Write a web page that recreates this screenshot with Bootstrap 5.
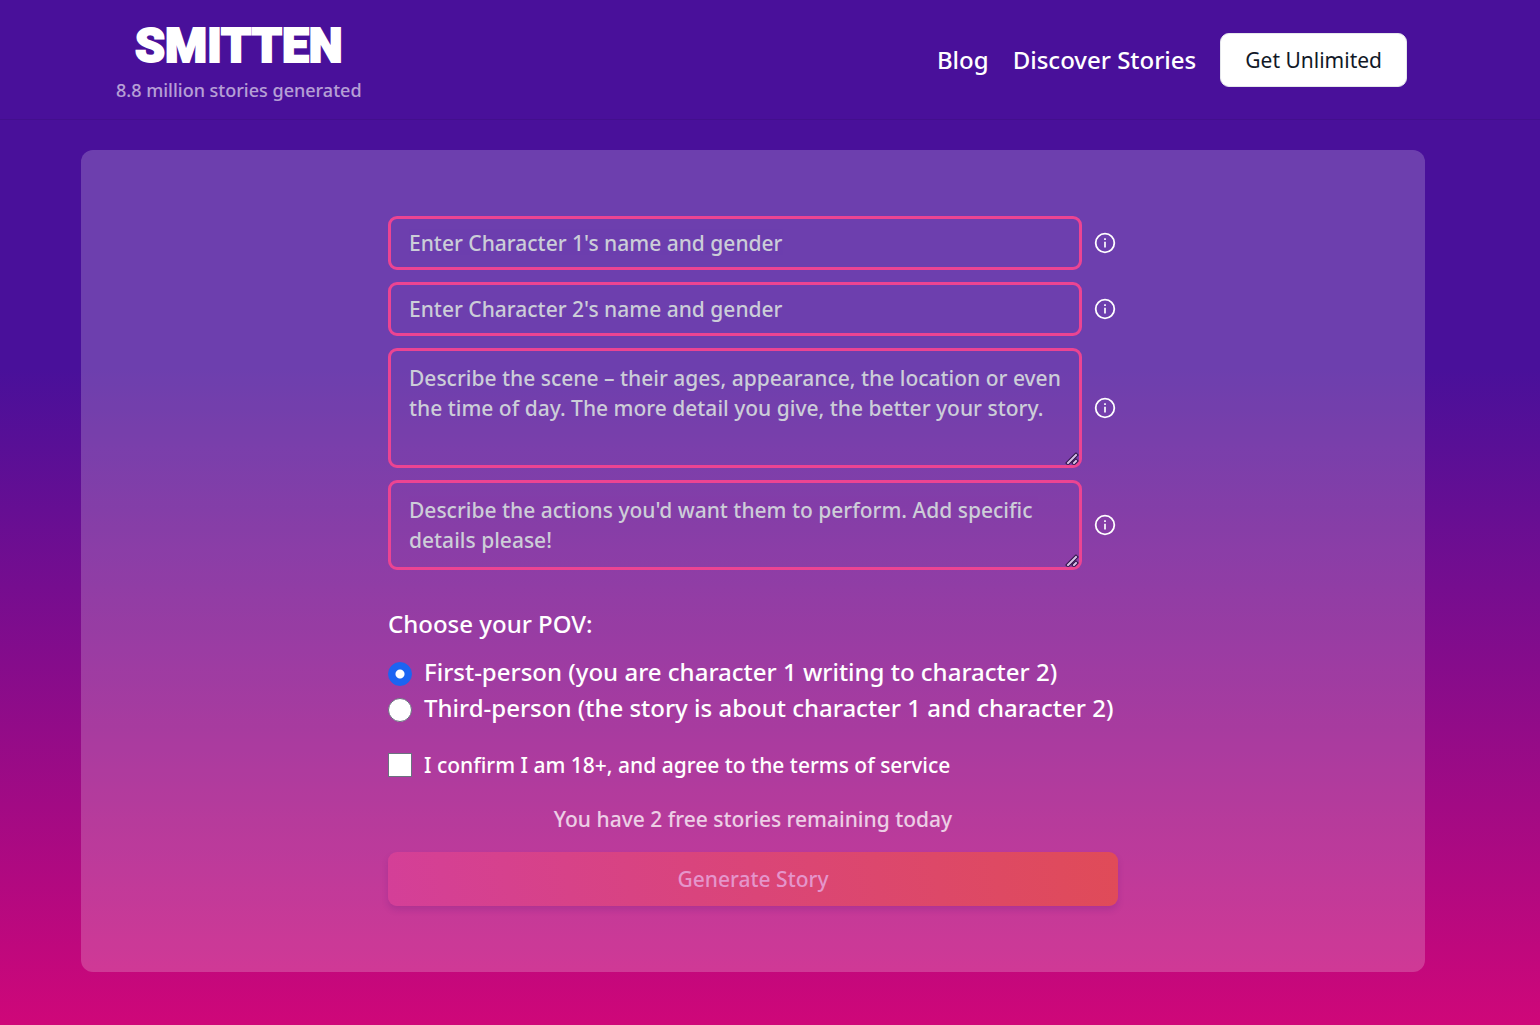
<!DOCTYPE html>
<html lang="en">
<head>
<meta charset="utf-8">
<meta name="viewport" content="width=device-width, initial-scale=1">
<title>Smitten</title>
<link href="https://cdn.jsdelivr.net/npm/bootstrap@5.3.0/dist/css/bootstrap.min.css" rel="stylesheet">
<style>
  body {
    min-height: 100vh;
    padding-right: 34px;
    font-family: "Noto Sans", "Open Sans", sans-serif;
    font-size: 21px;
    font-weight: 500;
    line-height: 30px;
    color: #fff;
    background: linear-gradient(#49109a 0%, #49109a 36%, #cf0779 100%) no-repeat #cf0779;
  }
  .site-header {
    height: 120px;
    margin-right: -34px;
    padding: 0 133px 0 116px;
    border-bottom: 1px solid #430f8d;
  }
  .brand-link { gap: 4px; }
  .brand-name {
    font-family: Roboto, sans-serif;
    font-size: 48px;
    font-weight: 900;
    line-height: 56px;
    -webkit-text-stroke: 2px #fff;
  }
  .brand-count { font-size: 18px; line-height: 24px; opacity: .6; }
  .site-link { font-size: 24px; line-height: 36px; }
  .btn-unlimited {
    --bs-btn-color: #111827;
    --bs-btn-bg: #fff;
    --bs-btn-border-color: #e5e7eb;
    --bs-btn-hover-bg: #f3f4f6;
    --bs-btn-border-radius: 9px;
    --bs-btn-padding-x: 24px;
    --bs-btn-padding-y: 11px;
    --bs-btn-font-size: 21px;
    --bs-btn-line-height: 30px;
  }
  .story-panel {
    max-width: 1344px;
    margin: 30px auto 53px;
    padding: 66px 24px;
    border-radius: 12px;
    background: rgba(255, 255, 255, .2);
  }
  .story-form { max-width: 730px; }
  .field-row { gap: 12px; margin-bottom: 12px; }
  .story-form .form-control {
    padding: 9px 18px;
    border: 3px solid #ec4492;
    border-radius: 9px;
    font-size: 21px;
    font-weight: 500;
    line-height: 30px;
    color: #fff;
    background: transparent;
  }
  .story-form textarea.form-control { padding: 12px 15px 12px 18px; }
  .story-form .form-control::placeholder { color: #d1d5db; opacity: .95; }
  .story-form textarea::-webkit-resizer {
    background: url("data:image/svg+xml,%3Csvg xmlns='http://www.w3.org/2000/svg' viewBox='0 0 15 15'%3E%3Cg fill='none' stroke-linecap='square'%3E%3Cpath d='M4 13L12 5M10 13L12 11' stroke='%232b1245' stroke-width='4'/%3E%3Cpath d='M4 13L12 5M10 13L12 11' stroke='%23d5bfe6' stroke-width='2'/%3E%3C/g%3E%3C/svg%3E") no-repeat;
  }
  .scene-box { height: 120px; }
  .action-box { height: 90px; }
  .info-icon { width: 24px; height: 24px; flex: none; }
  .pov-group { margin-top: 36px; font-size: 24px; line-height: 36px; }
  .pov-group legend { font-size: 24px; line-height: 36px; margin-bottom: 12px; }
  .choice-row { gap: 12px; }
  .story-form .form-check-input {
    width: 24px;
    height: 24px;
    margin: 0;
    flex: none;
    border: 1px solid #6b7280;
  }
  .story-form .form-check-input[type=radio] { margin-top: 3px; }
  .story-form .form-check-input[type=checkbox] { border-radius: 0; }
  .story-form .form-check-input:checked {
    background: radial-gradient(circle, #fff 4px, #1c64f2 5px);
    border-color: #1c64f2;
  }
  .confirm-row { margin-top: 24px; }
  .remaining-note { margin: 24px 0 18px; opacity: .75; }
  .btn-generate {
    padding: 12px;
    border: 0;
    border-radius: 9px;
    font-size: 21px;
    font-weight: 500;
    line-height: 30px;
    background: linear-gradient(80deg, #d43f98, #e04b58);
    box-shadow: 0 4px 6px rgba(80, 20, 120, .18);
  }
  .btn-generate:disabled { color: #e595cb; opacity: 1; }
</style>
</head>
<body>
<header class="site-header d-flex align-items-center justify-content-between">
  <a href="#" class="brand-link d-flex flex-column align-items-center text-white text-decoration-none">
    <span class="brand-name">SMITTEN</span>
    <span class="brand-count">8.8 million stories generated</span>
  </a>
  <nav class="d-flex align-items-center gap-4" aria-label="Main">
    <a href="#" class="site-link text-white text-decoration-none">Blog</a>
    <a href="#" class="site-link text-white text-decoration-none">Discover Stories</a>
    <button type="button" class="btn btn-unlimited">Get Unlimited</button>
  </nav>
</header>
<svg class="d-none" aria-hidden="true">
  <symbol id="info" viewBox="0 0 24 24">
    <circle cx="11" cy="12" r="9.3" fill="none" stroke="#fff" stroke-width="1.8"/>
    <path d="M10 7.2h2V9h-2zM10 10.8h2V16.500h-2z" fill="#fff" opacity=".85"/>
  </symbol>
</svg>
<main class="story-panel">
  <form class="story-form mx-auto">
    <div class="field-row d-flex align-items-center">
      <input type="text" class="form-control" aria-label="Character 1" placeholder="Enter Character 1's name and gender">
      <svg class="info-icon"><use href="#info"/></svg>
    </div>
    <div class="field-row d-flex align-items-center">
      <input type="text" class="form-control" aria-label="Character 2" placeholder="Enter Character 2's name and gender">
      <svg class="info-icon"><use href="#info"/></svg>
    </div>
    <div class="field-row d-flex align-items-center">
      <textarea class="form-control scene-box" aria-label="Scene" placeholder="Describe the scene – their ages, appearance, the location or even the time of day. The more detail you give, the better your story."></textarea>
      <svg class="info-icon"><use href="#info"/></svg>
    </div>
    <div class="field-row d-flex align-items-center">
      <textarea class="form-control action-box" aria-label="Actions" placeholder="Describe the actions you'd want them to perform. Add specific details please!"></textarea>
      <svg class="info-icon"><use href="#info"/></svg>
    </div>
    <fieldset class="pov-group">
      <legend>Choose your POV:</legend>
      <div class="choice-row d-flex align-items-center">
        <input class="form-check-input" type="radio" name="pov" id="first" checked>
        <label for="first" class="text-nowrap">First-person (you are character 1 writing to character 2)</label>
      </div>
      <div class="choice-row d-flex align-items-center">
        <input class="form-check-input" type="radio" name="pov" id="third">
        <label for="third" class="text-nowrap">Third-person (the story is about character 1 and character 2)</label>
      </div>
    </fieldset>
    <div class="choice-row confirm-row d-flex align-items-center">
      <input class="form-check-input" type="checkbox" id="confirm">
      <label for="confirm">I confirm I am 18+, and agree to the terms of service</label>
    </div>
    <p class="remaining-note text-center">You have 2 free stories remaining today</p>
    <button type="submit" class="btn btn-generate w-100" disabled>Generate Story</button>
  </form>
</main>
<script src="https://cdn.jsdelivr.net/npm/bootstrap@5.3.0/dist/js/bootstrap.bundle.min.js"></script>
</body>
</html>
